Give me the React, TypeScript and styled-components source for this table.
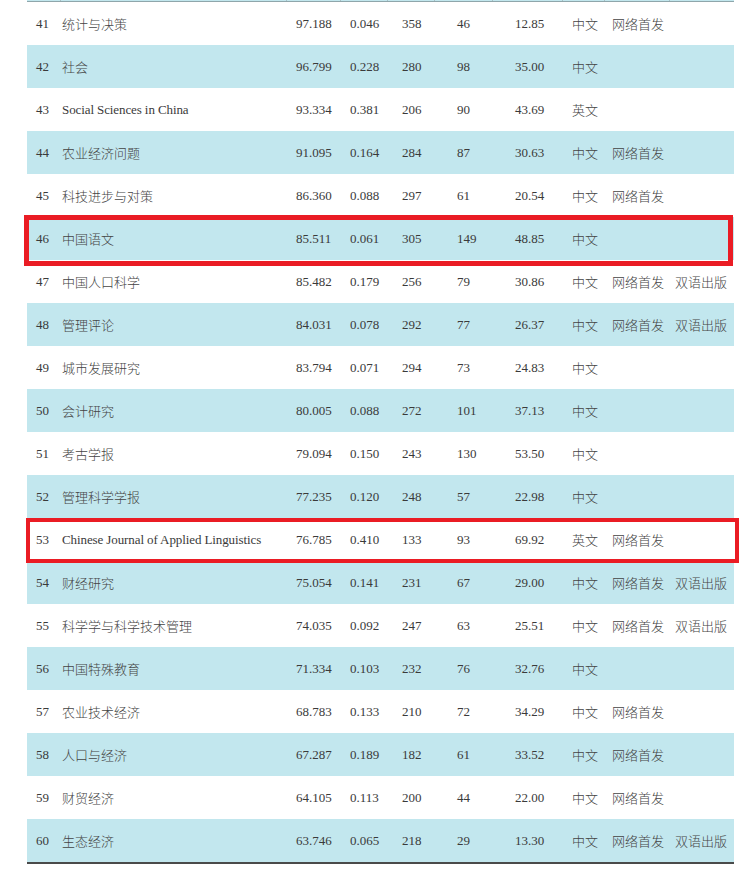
import React from "react";
import styled, { createGlobalStyle } from "styled-components";

const Global = createGlobalStyle`
  html, body { margin: 0; padding: 0; background: #ffffff; }
  body { font-family: "Liberation Serif", "Noto Sans CJK SC", serif; }
`;

type Row = {
  rank: number;
  name: string;
  score: string;
  a: string;
  b: string;
  c: string;
  d: string;
  lang: string;
  online?: boolean;
  bilingual?: boolean;
};

const rows: Row[] = [
  { rank: 41, name: "统计与决策", score: "97.188", a: "0.046", b: "358", c: "46", d: "12.85", lang: "中文", online: true },
  { rank: 42, name: "社会", score: "96.799", a: "0.228", b: "280", c: "98", d: "35.00", lang: "中文" },
  { rank: 43, name: "Social Sciences in China", score: "93.334", a: "0.381", b: "206", c: "90", d: "43.69", lang: "英文" },
  { rank: 44, name: "农业经济问题", score: "91.095", a: "0.164", b: "284", c: "87", d: "30.63", lang: "中文", online: true },
  { rank: 45, name: "科技进步与对策", score: "86.360", a: "0.088", b: "297", c: "61", d: "20.54", lang: "中文", online: true },
  { rank: 46, name: "中国语文", score: "85.511", a: "0.061", b: "305", c: "149", d: "48.85", lang: "中文" },
  { rank: 47, name: "中国人口科学", score: "85.482", a: "0.179", b: "256", c: "79", d: "30.86", lang: "中文", online: true, bilingual: true },
  { rank: 48, name: "管理评论", score: "84.031", a: "0.078", b: "292", c: "77", d: "26.37", lang: "中文", online: true, bilingual: true },
  { rank: 49, name: "城市发展研究", score: "83.794", a: "0.071", b: "294", c: "73", d: "24.83", lang: "中文" },
  { rank: 50, name: "会计研究", score: "80.005", a: "0.088", b: "272", c: "101", d: "37.13", lang: "中文" },
  { rank: 51, name: "考古学报", score: "79.094", a: "0.150", b: "243", c: "130", d: "53.50", lang: "中文" },
  { rank: 52, name: "管理科学学报", score: "77.235", a: "0.120", b: "248", c: "57", d: "22.98", lang: "中文" },
  { rank: 53, name: "Chinese Journal of Applied Linguistics", score: "76.785", a: "0.410", b: "133", c: "93", d: "69.92", lang: "英文", online: true },
  { rank: 54, name: "财经研究", score: "75.054", a: "0.141", b: "231", c: "67", d: "29.00", lang: "中文", online: true, bilingual: true },
  { rank: 55, name: "科学学与科学技术管理", score: "74.035", a: "0.092", b: "247", c: "63", d: "25.51", lang: "中文", online: true, bilingual: true },
  { rank: 56, name: "中国特殊教育", score: "71.334", a: "0.103", b: "232", c: "76", d: "32.76", lang: "中文" },
  { rank: 57, name: "农业技术经济", score: "68.783", a: "0.133", b: "210", c: "72", d: "34.29", lang: "中文", online: true },
  { rank: 58, name: "人口与经济", score: "67.287", a: "0.189", b: "182", c: "61", d: "33.52", lang: "中文", online: true },
  { rank: 59, name: "财贸经济", score: "64.105", a: "0.113", b: "200", c: "44", d: "22.00", lang: "中文", online: true },
  { rank: 60, name: "生态经济", score: "63.746", a: "0.065", b: "218", c: "29", d: "13.30", lang: "中文", online: true, bilingual: true },
];

type Box = { top: number; left: number; right: number; bottom: number; width: number };
const highlights: Record<number, Box> = {
  46: { top: -2, left: -3, right: 1, bottom: -6, width: 5 },
  53: { top: 0, left: -1, right: -5, bottom: -2, width: 4 },
};

const Table = styled.div`
  margin-left: 27px;
  width: 707px;
  display: flex;
  flex-direction: column;
`;

const HeaderStub = styled.div`
  display: flex;
  flex: 0 0 2px;
  margin-top: -1px;
  background: #c2e7ee;
  border-bottom: 1px solid #8fa6ab;
`;

const StubCell = styled.span<{ $w: number }>`
  flex: 0 0 ${(p) => p.$w}px;
  box-sizing: border-box;
  height: 2px;
  border-right: 1px solid #a9c0c5;
  &:last-child { border-right: none; }
`;

const stubWidths = [34, 226, 54, 47, 47, 58, 70, 42, 65, 64];

const RowEl = styled.div<{ $shaded: boolean }>`
  position: relative;
  display: grid;
  grid-template-columns: 26px 234px 54px 52px 55px 58px 57px 40px 63px 59px;
  align-items: center;
  height: 43px;
  padding-left: 9px;
  background: ${(p) => (p.$shaded ? "#c2e7ee" : "#ffffff")};
  color: #3a3a3a;
  font-size: 13px;
`;

const Cell = styled.div`
  white-space: nowrap;
  line-height: 1;
`;

const CjkCell = styled(Cell)`
  font-family: "Noto Sans CJK SC", "Liberation Serif", sans-serif;
  font-weight: 300;
  color: #444;
`;

const NameCell = styled(Cell)<{ $cjk: boolean }>`
  font-family: ${(p) =>
    p.$cjk ? `"Noto Sans CJK SC", "Liberation Serif", sans-serif` : `"Liberation Serif", serif`};
  font-weight: ${(p) => (p.$cjk ? 300 : 400)};
  color: ${(p) => (p.$cjk ? "#444" : "#3a3a3a")};
  letter-spacing: ${(p) => (p.$cjk ? "0" : "-0.1px")};
`;

const Highlight = styled.div<{ $w: number }>`
  position: absolute;
  z-index: 2;
  border: ${(p) => p.$w}px solid #ea1c24;
  pointer-events: none;
`;

const BottomRule = styled.div`
  height: 2px;
  background: #4a4a4a;
`;

const hasCjk = (s: string) => /[\u4e00-\u9fff]/.test(s);

export default function App() {
  return (
    <>
      <Global />
      <Table>
        <HeaderStub>
          {stubWidths.map((w, i) => (
            <StubCell key={i} $w={w} />
          ))}
        </HeaderStub>
        {rows.map((r) => {
          const box = highlights[r.rank];
          return (
            <RowEl key={r.rank} $shaded={r.rank % 2 === 0}>
              <Cell>{r.rank}</Cell>
              <NameCell $cjk={hasCjk(r.name)}>{r.name}</NameCell>
              <Cell>{r.score}</Cell>
              <Cell>{r.a}</Cell>
              <Cell>{r.b}</Cell>
              <Cell>{r.c}</Cell>
              <Cell>{r.d}</Cell>
              <CjkCell>{r.lang}</CjkCell>
              <CjkCell>{r.online ? "网络首发" : ""}</CjkCell>
              <CjkCell>{r.bilingual ? "双语出版" : ""}</CjkCell>
              {box && (
                <Highlight
                  $w={box.width}
                  style={{ top: box.top, left: box.left, right: box.right, bottom: box.bottom }}
                />
              )}
            </RowEl>
          );
        })}
        <BottomRule />
      </Table>
    </>
  );
}
